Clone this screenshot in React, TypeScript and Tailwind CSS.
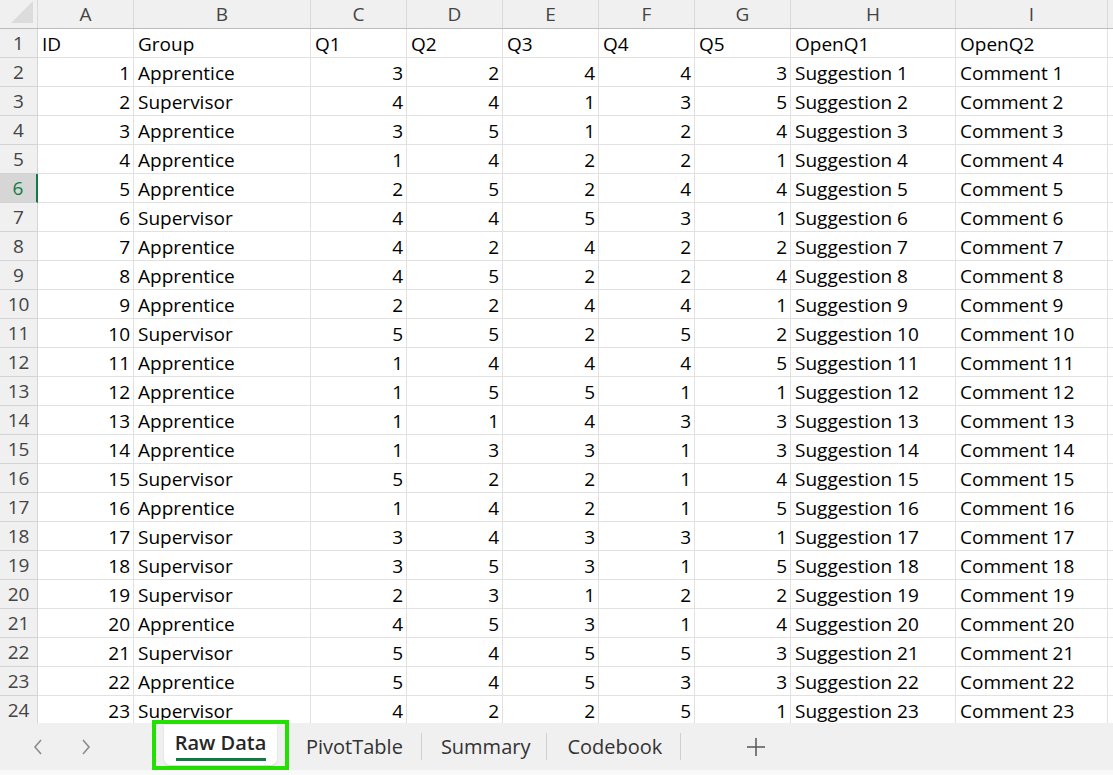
import React from "react";

const COLS = [
  { key: "A", w: 96 },
  { key: "B", w: 177 },
  { key: "C", w: 96 },
  { key: "D", w: 96 },
  { key: "E", w: 96 },
  { key: "F", w: 96 },
  { key: "G", w: 96 },
  { key: "H", w: 165 },
  { key: "I", w: 152 },
];

const RAW: [string, number[]][] = [
  ["Apprentice", [3, 2, 4, 4, 3]],
  ["Supervisor", [4, 4, 1, 3, 5]],
  ["Apprentice", [3, 5, 1, 2, 4]],
  ["Apprentice", [1, 4, 2, 2, 1]],
  ["Apprentice", [2, 5, 2, 4, 4]],
  ["Supervisor", [4, 4, 5, 3, 1]],
  ["Apprentice", [4, 2, 4, 2, 2]],
  ["Apprentice", [4, 5, 2, 2, 4]],
  ["Apprentice", [2, 2, 4, 4, 1]],
  ["Supervisor", [5, 5, 2, 5, 2]],
  ["Apprentice", [1, 4, 4, 4, 5]],
  ["Apprentice", [1, 5, 5, 1, 1]],
  ["Apprentice", [1, 1, 4, 3, 3]],
  ["Apprentice", [1, 3, 3, 1, 3]],
  ["Supervisor", [5, 2, 2, 1, 4]],
  ["Apprentice", [1, 4, 2, 1, 5]],
  ["Supervisor", [3, 4, 3, 3, 1]],
  ["Supervisor", [3, 5, 3, 1, 5]],
  ["Supervisor", [2, 3, 1, 2, 2]],
  ["Apprentice", [4, 5, 3, 1, 4]],
  ["Supervisor", [5, 4, 5, 5, 3]],
  ["Apprentice", [5, 4, 5, 3, 3]],
  ["Supervisor", [4, 2, 2, 5, 1]],
];

type Cell = { v: string; num?: boolean };

const rows: Cell[][] = [
  ["ID", "Group", "Q1", "Q2", "Q3", "Q4", "Q5", "OpenQ1", "OpenQ2"].map((v) => ({ v })),
  ...RAW.map(([g, qs], i) => [
    { v: String(i + 1), num: true },
    { v: g },
    ...qs.map((q) => ({ v: String(q), num: true })),
    { v: `Suggestion ${i + 1}` },
    { v: `Comment ${i + 1}` },
  ]),
];

const font = { fontFamily: "'Open Sans', 'Noto Sans', sans-serif" };

function ColHeader() {
  return (
    <div className="flex h-[29px] border-b border-[#bdbdbd] bg-[#f0f0f0]">
      <div className="relative w-[38px] shrink-0 border-r border-[#d9d9d9]">
        <svg className="absolute bottom-[5px] right-[4px]" width="22" height="22" viewBox="0 0 22 22">
          <polygon points="22,0 22,22 0,22" fill="#dcdcdc" />
        </svg>
      </div>
      {COLS.map((c) => (
        <div
          key={c.key}
          style={{ width: c.w }}
          className="flex shrink-0 items-center justify-center border-r border-[#d9d9d9] pt-[1px] text-[19px] text-[#444]"
        >
          {c.key}
        </div>
      ))}
      <div className="flex-1" />
    </div>
  );
}

function Row({ n, cells }: { n: number; cells: Cell[] }) {
  const active = n === 6;
  return (
    <div className="flex h-[29px]">
      <div
        className={`flex w-[38px] shrink-0 items-center justify-center border-b border-[#d4d4d4] pt-[1px] text-[19px] ${
          active ? "border-r-2 border-r-[#107c41] bg-[#d6d6d6] text-[#107c41]" : "border-r border-r-[#d4d4d4] bg-[#f0f0f0] text-[#444]"
        }`}
      >
        {n}
      </div>
      {cells.map((c, i) => (
        <div
          key={i}
          style={{ width: COLS[i].w }}
          className={`flex shrink-0 items-center overflow-hidden whitespace-nowrap border-b border-r border-[#e1e1e1] pt-[2px] text-[19px] text-black ${
            c.num ? "justify-end pr-[3px]" : "pl-[4px]"
          }`}
        >
          {c.v}
        </div>
      ))}
      <div className="flex-1 border-b border-[#e1e1e1]" />
    </div>
  );
}

function Chevron({ dir }: { dir: "l" | "r" }) {
  return (
    <svg width="10" height="16" viewBox="0 0 10 16">
      <polyline
        points={dir === "l" ? "8,1 2,8 8,15" : "2,1 8,8 2,15"}
        fill="none"
        stroke="#8c8c8c"
        strokeWidth="1.6"
      />
    </svg>
  );
}

function Sep() {
  return <div className="h-[27px] w-px bg-[#cfcfcf]" />;
}

function TabBar() {
  return (
    <div className="relative h-[52px] bg-[#f0f0f0] text-[20px] text-[#333]" style={font}>
      <div className="flex h-[47px] items-center">
        <div className="flex w-[43px] justify-end">
          <Chevron dir="l" />
        </div>
        <div className="flex w-[48px] justify-end">
          <Chevron dir="r" />
        </div>
        <div className="w-[61px]" />
        {/* active sheet, boxed */}
        <div className="-mt-[3px] flex h-[50px] w-[137px] items-stretch border-4 border-[#22e000] px-[8px] pt-[1px] pb-[1px]">
          <div className="flex flex-1 flex-col items-center justify-center rounded-b-[6px] bg-white shadow-[0_1px_2px_rgba(0,0,0,0.12)]">
            <span className="mt-[2px] font-semibold leading-[24px] text-[#262626]">Raw Data</span>
            <span className="mt-[3px] h-[3px] w-[90px] bg-[#107c41]" />
          </div>
        </div>
        <div className="w-[17px]" />
        <span>PivotTable</span>
        <div className="w-[18px]" />
        <Sep />
        <div className="w-[19px]" />
        <span>Summary</span>
        <div className="w-[16px]" />
        <Sep />
        <div className="w-[20px]" />
        <span>Codebook</span>
        <div className="w-[18px]" />
        <Sep />
        <div className="w-[66px]" />
        <svg width="18" height="18" viewBox="0 0 18 18">
          <path d="M9 0 V18 M0 9 H18" stroke="#555" strokeWidth="1.5" />
        </svg>
      </div>
      <div className="h-[5px] bg-[#f9f9f9]" />
    </div>
  );
}

export default function App() {
  return (
    <div className="flex h-[775px] w-[1113px] flex-col overflow-hidden bg-white" style={font}>
      <div className="h-[723px] overflow-hidden">
        <ColHeader />
        {rows.map((r, i) => (
          <Row key={i} n={i + 1} cells={r} />
        ))}
      </div>
      <TabBar />
    </div>
  );
}
